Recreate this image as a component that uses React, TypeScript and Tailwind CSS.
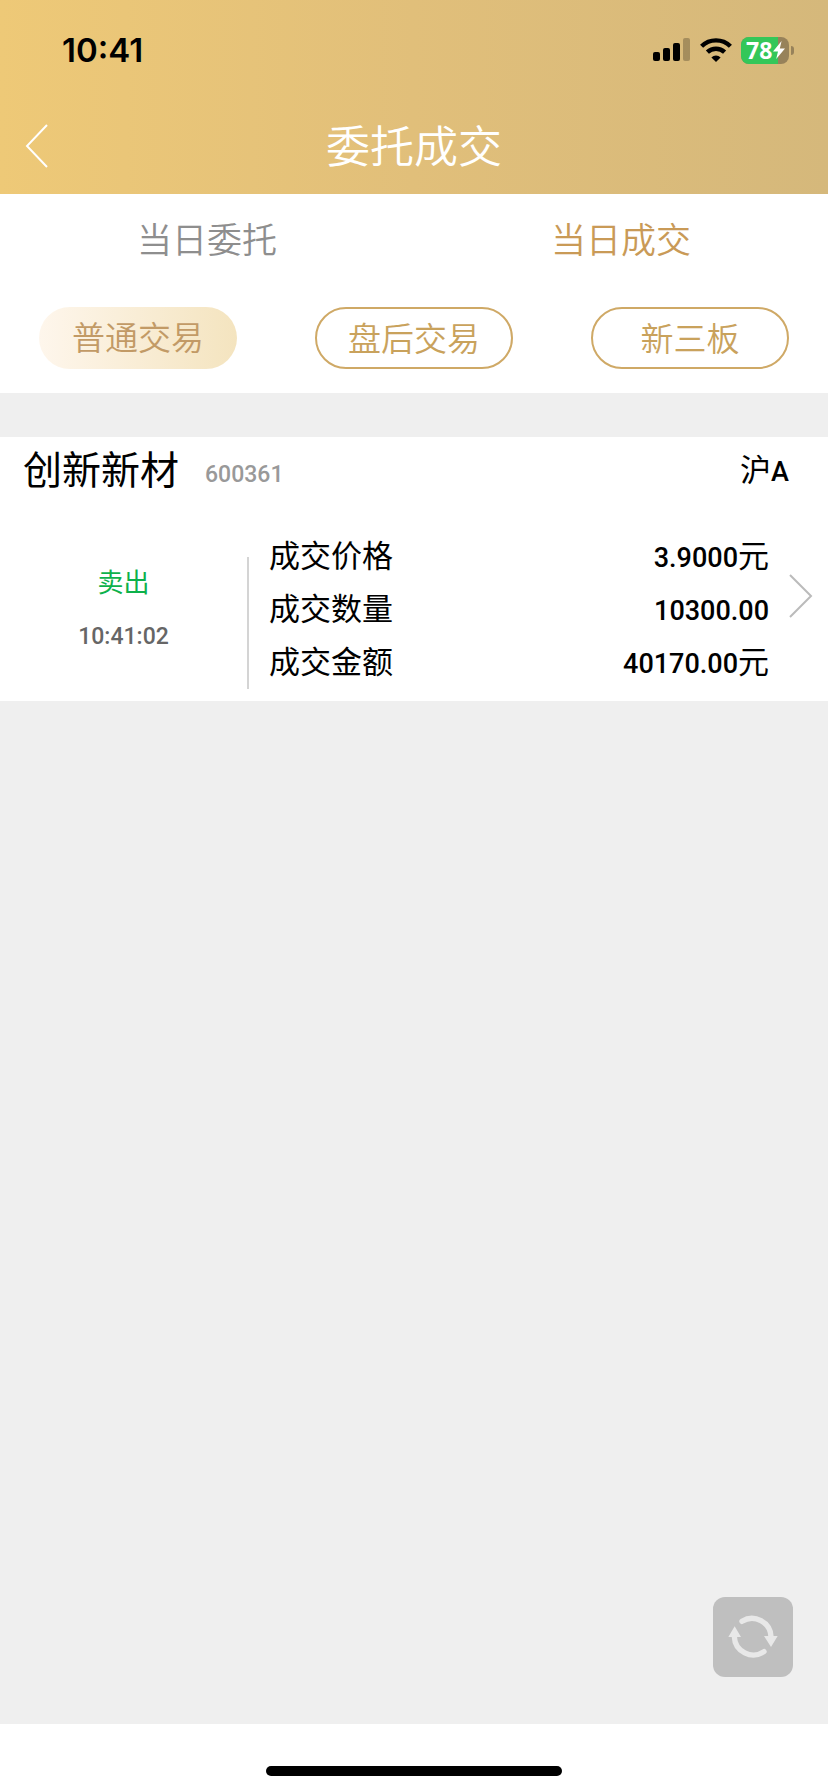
import clsx from 'clsx';

const tabs = [
    { label: '当日委托', active: false },
    { label: '当日成交', active: true },
];

const markets = [
    { label: '普通交易', active: true },
    { label: '盘后交易', active: false },
    { label: '新三板', active: false },
];

const details = [
    { label: '成交价格', value: '3.9000', unit: '元' },
    { label: '成交数量', value: '10300.00', unit: '' },
    { label: '成交金额', value: '40170.00', unit: '元' },
];

function StatusBar() {
    return (
        <div className="flex h-[98px] items-center justify-between pt-[2px] pr-[34px] pl-[62px] font-['Inter',sans-serif] text-black">
            <span className="text-[33px] leading-none font-semibold">10:41</span>
            <div className="flex items-center">
                <svg className="mr-[10px] h-[24px] w-[37px]" viewBox="0 0 37 24">
                    <rect x="0" y="14" width="7" height="9" rx="2" />
                    <rect x="10" y="10" width="7" height="13" rx="2" />
                    <rect x="20" y="5" width="7" height="18" rx="2" />
                    <rect x="30" y="0" width="7" height="23" rx="2" fillOpacity="0.24" />
                </svg>
                <svg className="mr-[9px] h-[24px] w-[32px]" viewBox="0 0 32 24">
                    <path d="M1.6 8.2a20.6 20.6 0 0 1 28.8 0" fill="none" stroke="#000" strokeWidth="4.4" />
                    <path d="M7.4 14.2a12.4 12.4 0 0 1 17.2 0" fill="none" stroke="#000" strokeWidth="4.4" />
                    <path d="M16 24l-4.6-4.6a6.6 6.6 0 0 1 9.2 0z" />
                </svg>
                {/* Battery */}
                <div className="relative flex h-[27px] w-[48px] items-center rounded-[8px] bg-[#97825a] pl-[5px]">
                    <div className="absolute inset-y-0 left-0 w-[37px] rounded-l-[8px] bg-[#34c759]" />
                    <span className="relative font-['Open_Sans',sans-serif] text-[23px] leading-none font-bold text-white">78</span>
                    <svg className="absolute right-[4px] h-[18px] w-[12px]" viewBox="0 0 12 18">
                        <path d="M8.6 0L0 10.4h5L3.2 18L12 7.4H6.8z" fill="#fff" />
                    </svg>
                </div>
                <div className="ml-[2px] h-[9px] w-[3px] rounded-r-full bg-[#97825a]" />
            </div>
        </div>
    );
}

function Header() {
    return (
        <header className="bg-linear-to-r from-[#eec977] via-[#e1bf7a] to-[#d5b87b]">
            <StatusBar />
            <div className="relative flex h-24 items-center justify-center">
                <button aria-label="返回" className="absolute left-[25px]">
                    <svg className="h-[44px] w-[24px]" viewBox="0 0 24 44" fill="none" stroke="#fff" strokeWidth="2">
                        <path d="M22 1L2 22l20 21" />
                    </svg>
                </button>
                <h1 className="pt-1 text-[44px] leading-none font-[350] text-white">委托成交</h1>
            </div>
        </header>
    );
}

function Filters() {
    return (
        <section className="bg-white pb-6">
            <div className="grid grid-cols-2">
                {tabs.map((tab) => (
                    <button
                        key={tab.label}
                        className={clsx(
                            'h-[90px] pt-1 text-[35px] leading-none font-[350]',
                            tab.active ? 'text-[#c99a57]' : 'text-[#8e8e8e]'
                        )}
                    >
                        {tab.label}
                    </button>
                ))}
            </div>
            <div className="mt-[23px] grid grid-cols-3 justify-items-center">
                {markets.map((market) => (
                    <button
                        key={market.label}
                        className={clsx(
                            'h-[62px] w-[198px] rounded-full text-[33px] leading-none font-[350]',
                            market.active
                                ? 'bg-linear-to-r from-[#fef6ec] to-[#f4e4bf] text-[#c29a66]'
                                : 'border-2 border-[#cfa966] pt-[2px] text-[#c9a25c]'
                        )}
                    >
                        {market.label}
                    </button>
                ))}
            </div>
        </section>
    );
}

function TradeCard() {
    return (
        <article className="mt-11 bg-white pb-3">
            <div className="flex h-[66px] items-center pr-[39px] pl-[23px]">
                <h2 className="pt-[2px] text-[39px] leading-none">创新新材</h2>
                <span className="ml-[26px] pt-2 text-[23px] leading-none font-medium text-[#999]">600361</span>
                <span className="ml-auto text-[31px] leading-none">
                    沪<span className="text-[27px] font-medium">A</span>
                </span>
            </div>
            <div className="flex">
                <div className="w-[247px] pt-[54px] text-center leading-[53px]">
                    <p className="text-[26px] text-[#0db14b]">卖出</p>
                    <p className="text-[23px] font-medium text-[#666]">10:41:02</p>
                </div>
                <div className="h-[132px] w-[2px] self-end bg-[#d4d4d4]" />
                <dl className="flex-1 pt-[27px] pl-5 text-[31px] leading-[53px]">
                    {details.map((row) => (
                        <div key={row.label} className="flex h-[53px] justify-between">
                            <dt>{row.label}</dt>
                            <dd>
                                <span className="text-[27px] font-medium">{row.value}</span>
                                {row.unit}
                            </dd>
                        </div>
                    ))}
                </dl>
                <button aria-label="查看详情" className="ml-5 pr-[15px]">
                    <svg className="h-[44px] w-[24px]" viewBox="0 0 24 44" fill="none" stroke="#bbb" strokeWidth="2">
                        <path d="M1 1l21 21L1 43" />
                    </svg>
                </button>
            </div>
        </article>
    );
}

function RefreshButton() {
    return (
        <button aria-label="刷新" className="absolute right-[35px] bottom-[47px] size-20 rounded-xl bg-[#bfbfbf]">
            <svg className="size-20" viewBox="0 0 240 240">
                <g fill="none" stroke="#e8e8e8" strokeWidth="16" strokeLinecap="round">
                    <path d="M87 73A57 57 0 0 1 174 119" />
                    <path d="M64 119A57 57 0 0 0 153 164" />
                </g>
                <path d="M153 117h41l-20 33zM46 120h38L65 88z" fill="#e8e8e8" />
            </svg>
        </button>
    );
}

export default function App() {
    return (
        <div className="flex min-h-screen flex-col bg-[#efefef] font-['Roboto','Noto_Sans_CJK_SC',sans-serif] text-black">
            <Header />
            <main className="relative flex-1">
                <Filters />
                <TradeCard />
                <RefreshButton />
            </main>
            <footer className="flex h-[68px] items-end justify-center bg-white pb-4">
                <div className="h-[10px] w-[296px] rounded-full bg-black" />
            </footer>
        </div>
    );
}
